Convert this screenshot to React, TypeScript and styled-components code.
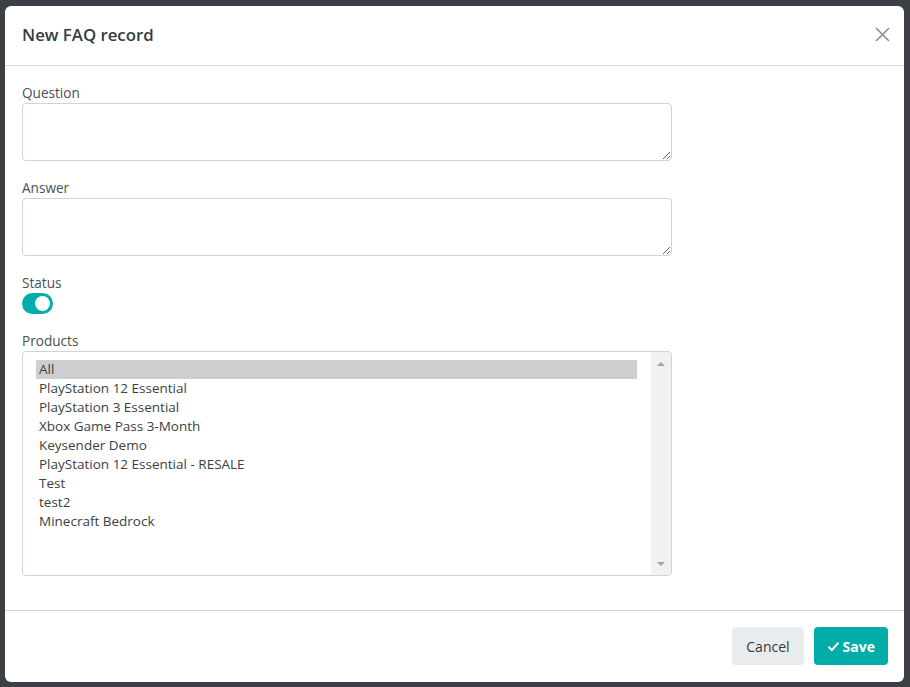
import React from "react";
import styled, { createGlobalStyle } from "styled-components";

const Global = createGlobalStyle`
  html, body { margin: 0; padding: 0; }
  body {
    background: #3c4045;
    font-family: "Open Sans", "Noto Sans", sans-serif;
    width: 910px;
    height: 687px;
    overflow: hidden;
  }
  * { box-sizing: border-box; }
`;

const Backdrop = styled.div`
  width: 910px;
  height: 687px;
  padding: 6px 6px 5px 5px;
`;

const Modal = styled.div`
  width: 899px;
  height: 676px;
  background: #fff;
  border-radius: 6px;
  display: flex;
  flex-direction: column;
`;

const Header = styled.div`
  height: 60px;
  display: flex;
  align-items: center;
  justify-content: space-between;
  padding: 0 14px 2px 17px;
  border-bottom: 1px solid #d5d9de;
`;

const Title = styled.h5`
  margin: 0;
  font-size: 16.8px;
  font-weight: 600;
  color: #363b40;
`;

const CloseButton = styled.button`
  border: 0;
  background: none;
  padding: 0;
  width: 16px;
  height: 16px;
  display: flex;
  align-items: center;
  justify-content: center;
  cursor: pointer;
`;

const Body = styled.div`
  flex: 1;
  padding: 16px 17px 17px;
`;

const Group = styled.div`
  margin-bottom: 16px;
`;

const Label = styled.label`
  display: block;
  font-size: 13.6px;
  line-height: 21px;
  color: #4a4f54;
`;

const TextArea = styled.textarea`
  display: block;
  width: 650px;
  height: 58px;
  border: 1px solid #ced4da;
  border-radius: 4px;
  resize: vertical;
  font-family: inherit;
  font-size: 14px;
  padding: 6px 10px;
  outline: none;
`;

const Switch = styled.div<{ $on: boolean }>`
  width: 31px;
  height: 21px;
  border-radius: 11px;
  background: ${(p) => (p.$on ? "#00ada9" : "#ced4da")};
  position: relative;
  &::after {
    content: "";
    position: absolute;
    top: 3px;
    left: ${(p) => (p.$on ? "13px" : "3px")};
    width: 15px;
    height: 15px;
    border-radius: 50%;
    background: #fff;
  }
`;

const ListBox = styled.div`
  width: 650px;
  height: 225px;
  border: 1px solid #ced4da;
  border-radius: 4px;
  display: flex;
  overflow: hidden;
`;

const Options = styled.div`
  flex: 1;
  padding: 8px 14px 8px 13px;
`;

const Option = styled.div<{ $selected?: boolean }>`
  font-size: 13.5px;
  line-height: 19px;
  height: 19px;
  padding: 0 3px;
  color: #3a3f44;
  background: ${(p) => (p.$selected ? "#cecece" : "transparent")};
  white-space: nowrap;
`;

const Track = styled.div`
  width: 20px;
  background: #f1f1f1;
  display: flex;
  flex-direction: column;
  justify-content: space-between;
  align-items: center;
  padding: 10px 0 9px;
`;

const Arrow = styled.div<{ $down?: boolean }>`
  width: 0;
  height: 0;
  border-left: 4px solid transparent;
  border-right: 4px solid transparent;
  ${(p) =>
    p.$down
      ? "border-top: 4px solid #a3a3a3;"
      : "border-bottom: 4px solid #a3a3a3;"}
`;

const Footer = styled.div`
  height: 72px;
  border-top: 1px solid #d5d9de;
  display: flex;
  justify-content: flex-end;
  align-items: flex-start;
  gap: 10px;
  padding: 16px 16px 0;
`;

const Button = styled.button<{ $primary?: boolean }>`
  height: 38px;
  border: 0;
  border-radius: 4px;
  font-family: inherit;
  font-size: 14px;
  font-weight: ${(p) => (p.$primary ? 700 : 400)};
  padding: 0 ${(p) => (p.$primary ? "13px" : "14px")};
  background: ${(p) => (p.$primary ? "#00ada9" : "#e9ecef")};
  color: ${(p) => (p.$primary ? "#fff" : "#34393e")};
  display: flex;
  align-items: center;
  gap: 3px;
  cursor: pointer;
`;

const products = [
  "All",
  "PlayStation 12 Essential",
  "PlayStation 3 Essential",
  "Xbox Game Pass 3-Month",
  "Keysender Demo",
  "PlayStation 12 Essential - RESALE",
  "Test",
  "test2",
  "Minecraft Bedrock",
];

export default function App() {
  return (
    <>
      <Global />
      <Backdrop>
        <Modal>
          <Header>
            <Title>New FAQ record</Title>
            <CloseButton aria-label="Close">
              <svg width="15" height="15" viewBox="0 0 15 15">
                <path d="M1 1 L14 14 M14 1 L1 14" stroke="#8a8a8a" strokeWidth="1.5" />
              </svg>
            </CloseButton>
          </Header>
          <Body>
            <Group>
              <Label>Question</Label>
              <TextArea />
            </Group>
            <Group>
              <Label>Answer</Label>
              <TextArea />
            </Group>
            <Group>
              <Label>Status</Label>
              <Switch $on />
            </Group>
            <Group>
              <Label>Products</Label>
              <ListBox>
                <Options>
                  {products.map((p, i) => (
                    <Option key={p} $selected={i === 0}>
                      {p}
                    </Option>
                  ))}
                </Options>
                <Track>
                  <Arrow />
                  <Arrow $down />
                </Track>
              </ListBox>
            </Group>
          </Body>
          <Footer>
            <Button>Cancel</Button>
            <Button $primary>
              <svg width="13" height="13" viewBox="0 0 13 13">
                <path d="M1.5 6.8 L4.8 10 L11.5 2.8" stroke="#fff" strokeWidth="2" fill="none" />
              </svg>
              Save
            </Button>
          </Footer>
        </Modal>
      </Backdrop>
    </>
  );
}
